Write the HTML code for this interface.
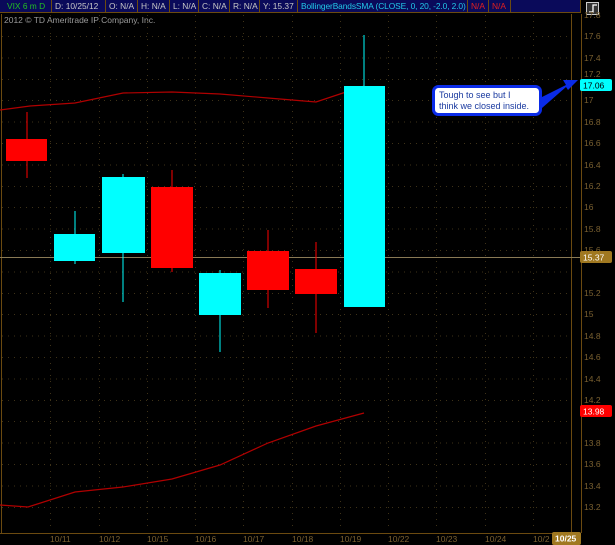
<!DOCTYPE html><html><head><style>
body{margin:0;background:#000;width:615px;height:545px;overflow:hidden;font-family:"Liberation Sans",sans-serif}
.h{position:absolute;top:0;height:13px;background:#0a0a5a;border-right:1px solid #6b4a10;border-bottom:1px solid #6b4a10;font-size:8.4px;line-height:13px;color:#c8c8c8;box-sizing:border-box;padding-left:3px;white-space:nowrap;overflow:hidden}
</style></head><body>
<div class="h" style="left:0;width:52px;color:#22c022;padding-left:7px">VIX 6 m D</div>
<div class="h" style="left:52px;width:54px">D: 10/25/12</div>
<div class="h" style="left:106px;width:32px">O: N/A</div>
<div class="h" style="left:138px;width:32px">H: N/A</div>
<div class="h" style="left:170px;width:29px">L: N/A</div>
<div class="h" style="left:199px;width:31px">C: N/A</div>
<div class="h" style="left:230px;width:30px">R: N/A</div>
<div class="h" style="left:260px;width:38px">Y: 15.37</div>
<div class="h" style="left:298px;width:170px;color:#22c8e8;letter-spacing:-0.1px">BollingerBandsSMA (CLOSE, 0, 20, -2.0, 2.0)</div>
<div class="h" style="left:468px;width:21px;color:#e02020">N/A</div>
<div class="h" style="left:489px;width:22px;color:#e02020">N/A</div>
<div class="h" style="left:511px;width:70px"></div>
<svg width="615" height="545" style="position:absolute;left:0;top:0">
<rect x="586.5" y="2.5" width="12" height="12" fill="#333" stroke="#ccc"/>
<polyline points="589,12 593,12 593,5 597,5" fill="none" stroke="#fff" stroke-width="1.3"/>
<text x="4" y="23" font-size="8.5" fill="#9a9a9a" font-family="Liberation Sans">2012 © TD Ameritrade IP Company, Inc.</text>
<g stroke="#3e3218" stroke-width="1" stroke-dasharray="1,5">
<line x1="2" x2="571" y1="36.5" y2="36.5"/><line x1="2" x2="571" y1="58" y2="58"/><line x1="2" x2="571" y1="79.5" y2="79.5"/><line x1="2" x2="571" y1="100.5" y2="100.5"/><line x1="2" x2="571" y1="122" y2="122"/><line x1="2" x2="571" y1="143.5" y2="143.5"/><line x1="2" x2="571" y1="165" y2="165"/><line x1="2" x2="571" y1="186.5" y2="186.5"/><line x1="2" x2="571" y1="207.5" y2="207.5"/><line x1="2" x2="571" y1="229" y2="229"/><line x1="2" x2="571" y1="250.5" y2="250.5"/><line x1="2" x2="571" y1="272" y2="272"/><line x1="2" x2="571" y1="293.5" y2="293.5"/><line x1="2" x2="571" y1="314.5" y2="314.5"/><line x1="2" x2="571" y1="336" y2="336"/><line x1="2" x2="571" y1="357.5" y2="357.5"/><line x1="2" x2="571" y1="379" y2="379"/><line x1="2" x2="571" y1="400.5" y2="400.5"/><line x1="2" x2="571" y1="421.5" y2="421.5"/><line x1="2" x2="571" y1="443" y2="443"/><line x1="2" x2="571" y1="464.5" y2="464.5"/><line x1="2" x2="571" y1="486" y2="486"/><line x1="2" x2="571" y1="507.5" y2="507.5"/>
<line y1="15" y2="528" x1="50.5" x2="50.5"/><line y1="15" y2="528" x1="99.5" x2="99.5"/><line y1="15" y2="528" x1="147.5" x2="147.5"/><line y1="15" y2="528" x1="195.5" x2="195.5"/><line y1="15" y2="528" x1="243.5" x2="243.5"/><line y1="15" y2="528" x1="292.5" x2="292.5"/><line y1="15" y2="528" x1="340.5" x2="340.5"/><line y1="15" y2="528" x1="388.5" x2="388.5"/><line y1="15" y2="528" x1="436.5" x2="436.5"/><line y1="15" y2="528" x1="485.5" x2="485.5"/><line y1="15" y2="528" x1="533.5" x2="533.5"/>
</g>
<g stroke="#6b4a10" fill="none"><line x1="1.5" y1="14" x2="1.5" y2="533"/><line x1="0" y1="533.5" x2="581" y2="533.5"/><line x1="571.5" y1="14" x2="571.5" y2="533"/><line x1="581.5" y1="14" x2="581.5" y2="533"/></g>
<line x1="0" x2="581" y1="257.5" y2="257.5" stroke="#8a7a55"/>
<polyline fill="none" stroke="#b00000" stroke-width="1.2" points="0,110 30,106 75,103 123,93 172,92 220,94 268,98 316,102 364,86"/>
<polyline fill="none" stroke="#b00000" stroke-width="1.2" points="0,505 28,507 75,492 123,487 172,479 220,465 268,443 316,426 364,413"/>
<g stroke-width="1">
<line x1="27" x2="27" y1="112" y2="178" stroke="#f00"/><rect x="6" y="139" width="41" height="22" fill="#f00"/>
<line x1="75" x2="75" y1="211" y2="264" stroke="#0ff"/><rect x="54" y="234" width="41" height="27" fill="#0ff"/>
<line x1="123" x2="123" y1="174" y2="302" stroke="#0ff"/><rect x="102" y="177" width="43" height="76" fill="#0ff"/>
<line x1="172" x2="172" y1="170" y2="272" stroke="#f00"/><rect x="151" y="187" width="42" height="81" fill="#f00"/>
<line x1="220" x2="220" y1="270" y2="352" stroke="#0ff"/><rect x="199" y="273" width="42" height="42" fill="#0ff"/>
<line x1="268" x2="268" y1="230" y2="308" stroke="#f00"/><rect x="247" y="251" width="42" height="39" fill="#f00"/>
<line x1="316" x2="316" y1="242" y2="333" stroke="#f00"/><rect x="295" y="269" width="42" height="25" fill="#f00"/>
<line x1="364" x2="364" y1="35" y2="86" stroke="#0ff"/><rect x="344" y="86" width="41" height="221" fill="#0ff"/>
</g>
<g font-size="8.5" fill="#7a6030" font-family="Liberation Sans">
<text x="584" y="18">17.8</text><text x="584" y="39">17.6</text><text x="584" y="61">17.4</text><text x="584" y="77">17.2</text><text x="584" y="103">17</text><text x="584" y="125">16.8</text><text x="584" y="146">16.6</text><text x="584" y="168">16.4</text><text x="584" y="189">16.2</text><text x="584" y="210">16</text><text x="584" y="232">15.8</text><text x="584" y="253">15.6</text><text x="584" y="296">15.2</text><text x="584" y="317">15</text><text x="584" y="339">14.8</text><text x="584" y="360">14.6</text><text x="584" y="382">14.4</text><text x="584" y="403">14.2</text><text x="584" y="446">13.8</text><text x="584" y="467">13.6</text><text x="584" y="489">13.4</text><text x="584" y="510">13.2</text>
<text x="50" y="542">10/11</text><text x="99" y="542">10/12</text><text x="147" y="542">10/15</text><text x="195" y="542">10/16</text><text x="243" y="542">10/17</text><text x="292" y="542">10/18</text><text x="340" y="542">10/19</text><text x="388" y="542">10/22</text><text x="436" y="542">10/23</text><text x="485" y="542">10/24</text><text x="533" y="542">10/2</text>
</g>
<rect x="580" y="79" width="32" height="12" rx="2" fill="#0ff"/><text x="583" y="88.5" font-size="8.5" fill="#000">17.06</text>
<rect x="580" y="251" width="32" height="12" rx="2" fill="#a07820"/><text x="583" y="260.5" font-size="8.5" fill="#fff">15.37</text>
<rect x="580" y="405" width="32" height="12" rx="2" fill="#f00"/><text x="583" y="414.5" font-size="8.5" fill="#fff">13.98</text>
<rect x="552" y="532" width="29" height="13" rx="2" fill="#a07820"/><text x="555" y="541.5" font-size="8.5" fill="#fff" font-weight="bold">10/25</text>
<polygon points="538,99 566,85 563,80 578,80 568,90 566,87 542,108" fill="#0a2be8"/>
<rect x="433.5" y="86.5" width="107" height="28" rx="5" fill="#fff" stroke="#0a2be8" stroke-width="3"/>
<text x="439" y="98" font-size="9" fill="#1a3aa0">Tough to see but I</text>
<text x="439" y="109" font-size="9" fill="#1a3aa0">think we closed inside.</text>
</svg>
</body></html>
